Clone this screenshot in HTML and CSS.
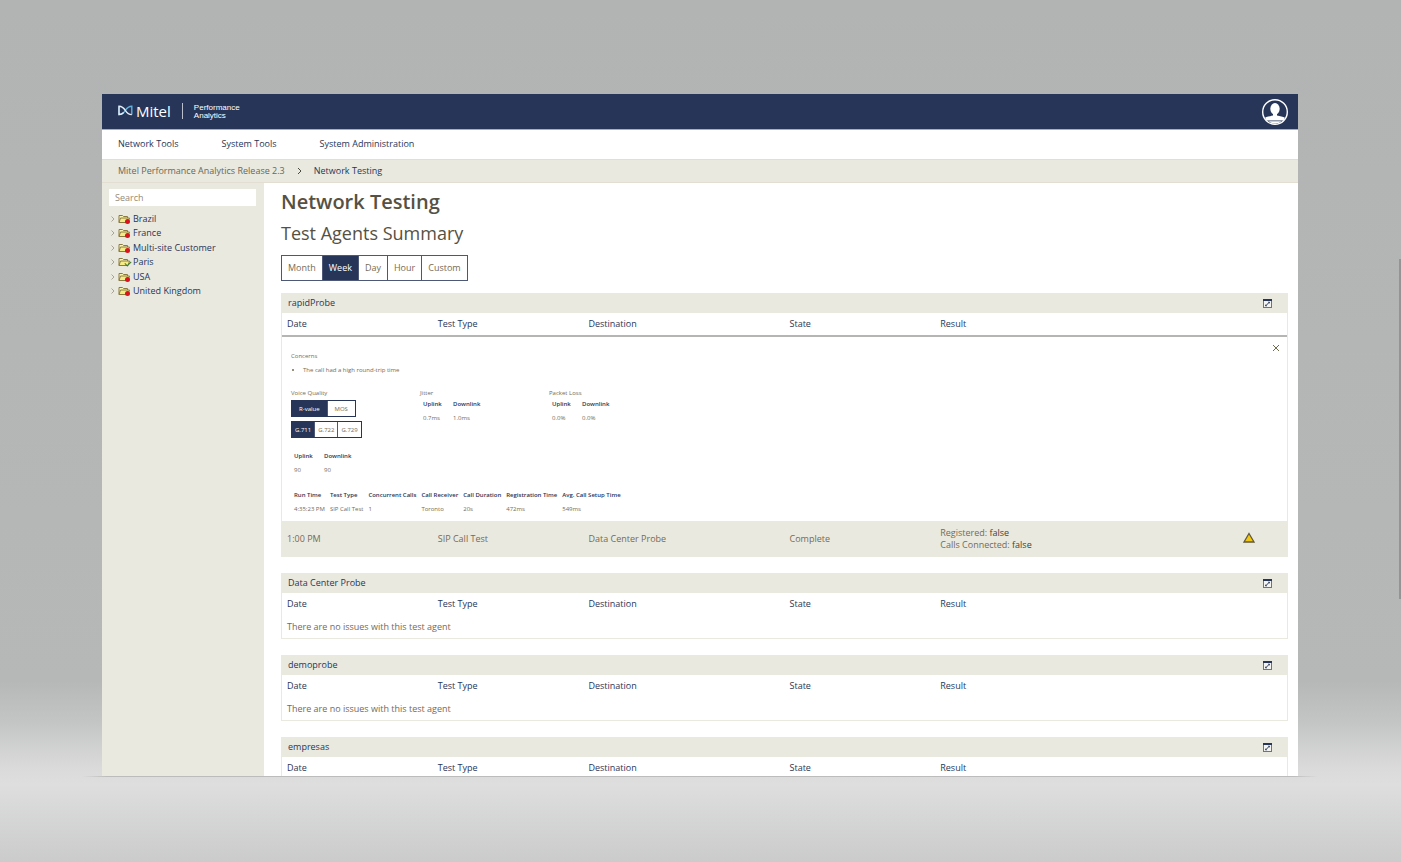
FILE: index.html
```html
<!DOCTYPE html>
<html lang="en">
<head>
  <meta charset="UTF-8">
  <meta name="viewport" content="width=device-width, initial-scale=1.0">
  <title>Network Testing</title>
  <link rel="stylesheet" href="styles.css">
</head>
<body>

  <!-- shared icons -->
  <svg class="sprite" aria-hidden="true">
    <symbol id="folder" viewBox="0 0 13 10">
      <path d="M1 8.5V1.5h3.5l1 1h4v1.5" fill="#fbf6b0" stroke="#8a7a42"/>
      <path d="M1 8.5l1.500-4.500h9l-1.500 4.500z" fill="#f6ec86" stroke="#8a7a42"/>
    </symbol>
    <symbol id="open" viewBox="0 0 9 9">
      <rect x="0.5" y="0.5" width="8" height="8" fill="#f4f4f2" stroke="#6b7290"/>
      <path d="M0 0h9v2H0z" fill="#273658"/>
      <path d="M2.500 7L6.500 3" fill="none" stroke="#273658"/>
      <path d="M4.800 2.800h1.900v1.900zM2.300 5.300v1.900h1.900z" fill="#273658"/>
    </symbol>
  </svg>

  <div class="window">
    <header class="topbar">
      <div class="brand">
        <svg class="brand-mark" viewBox="0 0 15 11">
          <path d="M1 1.2v8.4c3 0 5-2 6.3-4.2C8.8 3 10.5 1.2 13.8 1.2v8.4" fill="none" stroke="#5fb0dc" stroke-width="1.4"/>
          <path d="M13.8 9.6C10.5 9.6 8.8 7.8 7.3 5.4 6 3.2 4 1.2 1 1.2v8.4c2 0 3.500-.8 4.700-2" fill="none" stroke="#e6edf6" stroke-width="1.4"/>
        </svg>
        <span class="brand-name">Mitel</span>
        <span class="brand-product">Performance<br>Analytics</span>
      </div>
      <button class="user" aria-label="User menu">
        <svg viewBox="0 0 26 26">
          <circle cx="13" cy="13" r="12.3" fill="none" stroke="#fff" stroke-width="1.4"/>
          <ellipse cx="13" cy="9.8" rx="4.7" ry="5.8" fill="#fff"/>
          <path d="M11 14h4v2.500c3 .8 6 1 8 2.300l-1.500 2.700h-17L3 18.800c2-1.300 5-1.500 8-2.300z" fill="#fff"/>
          <path d="M6.500 22.300h13c-3.500 3-9.500 3-13 0z" fill="#fff"/>
        </svg>
      </button>
    </header>

    <nav class="menu">
      <a href="#">Network Tools</a>
      <a href="#">System Tools</a>
      <a href="#">System Administration</a>
    </nav>

    <div class="breadcrumb">
      <a href="#">Mitel Performance Analytics Release 2.3</a>
      <svg class="crumb-arrow" viewBox="0 0 5 8"><path d="M1 1l3 3-3 3" fill="none" stroke="#4c4a40"/></svg>
      <a href="#" class="current">Network Testing</a>
    </div>

    <div class="body">
      <aside class="sidebar">
        <input type="search" class="search" placeholder="Search" aria-label="Search">
        <ul class="tree">
          <li><svg class="arrow" viewBox="0 0 4 6"><path d="M.5.5L3 3 .5 5.5"/></svg><span class="folder"><svg><use href="#folder"/></svg></span><a href="#">Brazil</a></li>
          <li><svg class="arrow" viewBox="0 0 4 6"><path d="M.5.5L3 3 .5 5.5"/></svg><span class="folder"><svg><use href="#folder"/></svg></span><a href="#">France</a></li>
          <li><svg class="arrow" viewBox="0 0 4 6"><path d="M.5.5L3 3 .5 5.5"/></svg><span class="folder"><svg><use href="#folder"/></svg></span><a href="#">Multi-site Customer</a></li>
          <li><svg class="arrow" viewBox="0 0 4 6"><path d="M.5.5L3 3 .5 5.5"/></svg><span class="folder ok"><svg><use href="#folder"/></svg></span><a href="#">Paris</a></li>
          <li><svg class="arrow" viewBox="0 0 4 6"><path d="M.5.5L3 3 .5 5.5"/></svg><span class="folder"><svg><use href="#folder"/></svg></span><a href="#">USA</a></li>
          <li><svg class="arrow" viewBox="0 0 4 6"><path d="M.5.5L3 3 .5 5.5"/></svg><span class="folder"><svg><use href="#folder"/></svg></span><a href="#">United Kingdom</a></li>
        </ul>
      </aside>

      <main class="content">
        <h1>Network Testing</h1>
        <h2>Test Agents Summary</h2>

        <div class="toggle range">
          <button>Month</button>
          <button class="active">Week</button>
          <button>Day</button>
          <button>Hour</button>
          <button>Custom</button>
        </div>

        <section class="card">
          <div class="card-head">
            <h3>rapidProbe</h3>
            <button class="open" aria-label="Open"><svg><use href="#open"/></svg></button>
          </div>
          <table class="results ruled">
            <thead>
              <tr><th class="w15">Date</th><th class="w15">Test Type</th><th class="w20">Destination</th><th class="w15">State</th><th class="w20">Result</th><th class="w15"></th></tr>
            </thead>
            <tbody>
              <tr>
                <td class="detail" colspan="6">
                  <button class="close" aria-label="Close"><svg viewBox="0 0 8 8"><path d="M1 1l6 6M7 1L1 7" stroke="#6f6c4e"/></svg></button>
                  <p>Concerns</p>
                  <ul class="concerns">
                    <li>The call had a high round-trip time</li>
                  </ul>
                  <div class="metrics">
                    <div>
                      <p>Voice Quality</p>
                      <div class="toggle small wide">
                        <button class="active">R-value</button>
                        <button>MOS</button>
                      </div>
                      <div class="toggle small">
                        <button class="active">G.711</button>
                        <button>G.722</button>
                        <button>G.729</button>
                      </div>
                      <table class="mini quality">
                        <tr><th>Uplink</th><th>Downlink</th></tr>
                        <tr><td>90</td><td>90</td></tr>
                      </table>
                    </div>
                    <div>
                      <p>Jitter</p>
                      <table class="mini">
                        <tr><th>Uplink</th><th>Downlink</th></tr>
                        <tr><td>0.7ms</td><td>1.0ms</td></tr>
                      </table>
                    </div>
                    <div>
                      <p>Packet Loss</p>
                      <table class="mini">
                        <tr><th>Uplink</th><th>Downlink</th></tr>
                        <tr><td>0.0%</td><td>0.0%</td></tr>
                      </table>
                    </div>
                  </div>
                  <table class="mini run">
                    <tr><th>Run Time</th><th>Test Type</th><th>Concurrent Calls</th><th>Call Receiver</th><th>Call Duration</th><th>Registration Time</th><th>Avg. Call Setup Time</th></tr>
                    <tr><td>4:35:23 PM</td><td>SIP Call Test</td><td>1</td><td>Toronto</td><td>20s</td><td>472ms</td><td>549ms</td></tr>
                  </table>
                </td>
              </tr>
              <tr class="selected">
                <td>1:00 PM</td>
                <td>SIP Call Test</td>
                <td>Data Center Probe</td>
                <td>Complete</td>
                <td>Registered: <b>false</b><br>Calls Connected: <b>false</b></td>
                <td class="status"><svg viewBox="0 0 12 11"><path d="M6 1.5L11 10H1z" fill="#f2c80f" stroke="#625838" stroke-width="1.3"/></svg></td>
              </tr>
            </tbody>
          </table>
        </section>

        <section class="card">
          <div class="card-head">
            <h3>Data Center Probe</h3>
            <button class="open" aria-label="Open"><svg><use href="#open"/></svg></button>
          </div>
          <table class="results">
            <tr><th class="w15">Date</th><th class="w15">Test Type</th><th class="w20">Destination</th><th class="w15">State</th><th class="w20">Result</th><th class="w15"></th></tr>
            <tr><td colspan="6">There are no issues with this test agent</td></tr>
          </table>
        </section>

        <section class="card">
          <div class="card-head">
            <h3>demoprobe</h3>
            <button class="open" aria-label="Open"><svg><use href="#open"/></svg></button>
          </div>
          <table class="results">
            <tr><th class="w15">Date</th><th class="w15">Test Type</th><th class="w20">Destination</th><th class="w15">State</th><th class="w20">Result</th><th class="w15"></th></tr>
            <tr><td colspan="6">There are no issues with this test agent</td></tr>
          </table>
        </section>

        <section class="card">
          <div class="card-head">
            <h3>empresas</h3>
            <button class="open" aria-label="Open"><svg><use href="#open"/></svg></button>
          </div>
          <table class="results">
            <tr><th class="w15">Date</th><th class="w15">Test Type</th><th class="w20">Destination</th><th class="w15">State</th><th class="w20">Result</th><th class="w15"></th></tr>
          </table>
        </section>
      </main>
    </div>
  </div>

  <div class="floor-line"></div>
  <div class="scroll-thumb"></div>

</body>
</html>
```

FILE: styles.css
```css
* {
  box-sizing: border-box;
}
body {
  margin: 0;
  height: 100vh;
  padding: 94px 103px 85px 102px;
  display: flex;
  flex-direction: column;
  overflow: hidden;
  font-family: "Open Sans", "Noto Sans", sans-serif;
  font-size: 9px;
  line-height: 12px;
  color: #756b55;
  background: linear-gradient(#b2b4b3 0%, #b5b7b6 60%, #b6b8b7 79%, #c4c6c5 84%, #dadada 89%, #dededf 91%, #cacbca 100%);
}
a {
  color: #273658;
  text-decoration: none;
}
button {
  font: inherit;
  color: inherit;
  background: none;
  border: none;
  padding: 0;
  cursor: pointer;
}
svg {
  display: block;
}
.sprite {
  position: absolute;
  width: 0;
  height: 0;
}
.window {
  flex: 1;
  min-height: 0;
  display: flex;
  flex-direction: column;
  overflow: hidden;
  background: #fff;
}
.floor-line {
  height: 1px;
  flex: none;
  margin: 0 -20px;
  background: linear-gradient(90deg, transparent, #bcbcbc 2%, #bcbcbc 98%, transparent);
}
.scroll-thumb {
  position: fixed;
  right: 0;
  top: 30%;
  width: 2px;
  height: 340px;
  background: #959394;
}

/* top bar */
.topbar {
  flex: none;
  height: 36px;
  padding: 0 10px 0 16px;
  display: flex;
  align-items: center;
  justify-content: space-between;
  background: #273658;
  border-bottom: 1px solid #a9aebb;
  color: #fff;
}
.brand {
  display: flex;
  align-items: center;
  padding-bottom: 2px;
}
.brand-mark {
  width: 15px;
  height: 11px;
}
.brand-name {
  margin-left: 3px;
  padding-right: 11px;
  border-right: 1px solid #b9bfcc;
  font-size: 15px;
  line-height: 16px;
}
.brand-product {
  margin-left: 11px;
  padding-top: 2px;
  font-family: "Liberation Sans", Arial, sans-serif;
  font-size: 8px;
  line-height: 8px;
}
.user svg {
  width: 26px;
  height: 26px;
}
.menu {
  flex: none;
  height: 29px;
  padding: 0 16px 2px;
  display: flex;
  align-items: center;
  gap: 43px;
}
.breadcrumb {
  flex: none;
  height: 24px;
  padding-left: 16px;
  display: flex;
  align-items: center;
  gap: 12px;
  background: #e9e9e0;
  border-top: 1px solid #e2dfd2;
  border-bottom: 1px solid #e2dfd2;
}
.breadcrumb a {
  color: #6b6754;
}
.breadcrumb .current {
  color: #273658;
}
.crumb-arrow {
  width: 5px;
  height: 8px;
}
.body {
  flex: 1;
  min-height: 0;
  display: flex;
}

/* sidebar */
.sidebar {
  flex: none;
  width: 162px;
  padding: 6px 8px 0 7px;
  background: #e9e9e0;
}
.search {
  display: block;
  width: 100%;
  height: 17px;
  padding: 0 6px;
  border: none;
  font: inherit;
  color: #273658;
}
.search::placeholder {
  color: #958b75;
}
.tree {
  display: flex;
  flex-direction: column;
  justify-content: space-between;
  height: 86px;
  list-style: none;
  margin: 6px 0 0;
  padding: 0 2px;
}
.tree li {
  display: flex;
  align-items: center;
  height: 14px;
}
.arrow {
  width: 4px;
  height: 6px;
  fill: none;
  stroke: #a8a498;
}
.folder {
  position: relative;
  margin: 0 2px 0 3px;
}
.folder svg {
  width: 13px;
  height: 10px;
}
.folder::after {
  content: "";
  position: absolute;
  right: 1px;
  bottom: 0;
  width: 5px;
  height: 5px;
  border-radius: 50%;
  background: #d8141c;
}
.folder.ok::after {
  right: 0;
  bottom: 2px;
  width: 5px;
  height: 3px;
  border-radius: 0;
  background: none;
  border-left: 1px solid #3c7a2c;
  border-bottom: 1px solid #3c7a2c;
  transform: rotate(-45deg);
}

/* content */
.content {
  flex: 1;
  min-width: 0;
  padding: 6px 10px 0 17px;
  overflow: hidden;
}
h1, h2, h3, p {
  margin: 0;
}
h1 {
  font-size: 20px;
  line-height: 26px;
  font-weight: 600;
  color: #565142;
}
h2 {
  margin-top: 6px;
  font-size: 18px;
  line-height: 24px;
  font-weight: 400;
  color: #565142;
}
.toggle {
  display: flex;
  width: max-content;
  border: 1px solid #4d5876;
}
.toggle button + button {
  border-left: 1px solid #4d5876;
}
.toggle .active {
  background: #273658;
  color: #fff;
}
.range {
  margin: 10px 0 12px;
}
.range button {
  height: 24px;
  padding: 0 6px;
}
.card {
  margin-bottom: 16px;
  border: 1px solid #e9e9e0;
}
.card-head {
  display: flex;
  align-items: center;
  justify-content: space-between;
  height: 19px;
  padding: 0 15px 0 6px;
  background: #e9e9e0;
}
h3 {
  padding-bottom: 1px;
  font-size: 9px;
  font-weight: 400;
  color: #273658;
}
.open svg {
  width: 9px;
  height: 9px;
}
.results {
  width: 100%;
  table-layout: fixed;
  border-collapse: collapse;
}
.results th, .results td {
  height: 22px;
  padding: 0 5px;
  text-align: left;
  font-weight: 400;
}
.results td {
  height: 23px;
}
.results th {
  color: #273658;
}
.w15 {
  width: 15%;
}
.w20 {
  width: 20%;
}
.ruled thead th {
  height: 23px;
  border-bottom: 2px solid #b5b5b3;
}
.results .selected td {
  height: 35px;
  background: #e9e9e0;
}
.selected b {
  font-weight: 400;
  color: #453f33;
}
.results .status {
  padding: 0 32px 3px 0;
}
.status svg {
  width: 12px;
  height: 11px;
  margin-left: auto;
}

/* test detail */
.results .detail {
  position: relative;
  height: 185px;
  padding: 15px 9px 0;
  vertical-align: top;
  font-size: 6px;
  line-height: 8px;
}
.close {
  position: absolute;
  top: 7px;
  right: 7px;
}
.close svg {
  width: 8px;
  height: 8px;
}
.concerns {
  margin: 6px 0 15px;
  padding-left: 12px;
}
.metrics {
  display: grid;
  grid-template-columns: 129px 129px 129px;
}
.small {
  margin: 3px 0 4px;
  border-color: #273658;
}
.small button {
  height: 15px;
  padding: 0 3px;
}
.wide button {
  padding: 0 7px;
}
.mini {
  border-collapse: collapse;
}
.results .mini th, .results .mini td {
  height: 14px;
  padding: 0 2px 0 3px;
  white-space: nowrap;
}
.results .mini th {
  font-weight: 600;
}
.mini th:first-child {
  min-width: 30px;
}
.quality {
  margin-top: 11px;
}
.run {
  margin-top: 11px;
}
```
